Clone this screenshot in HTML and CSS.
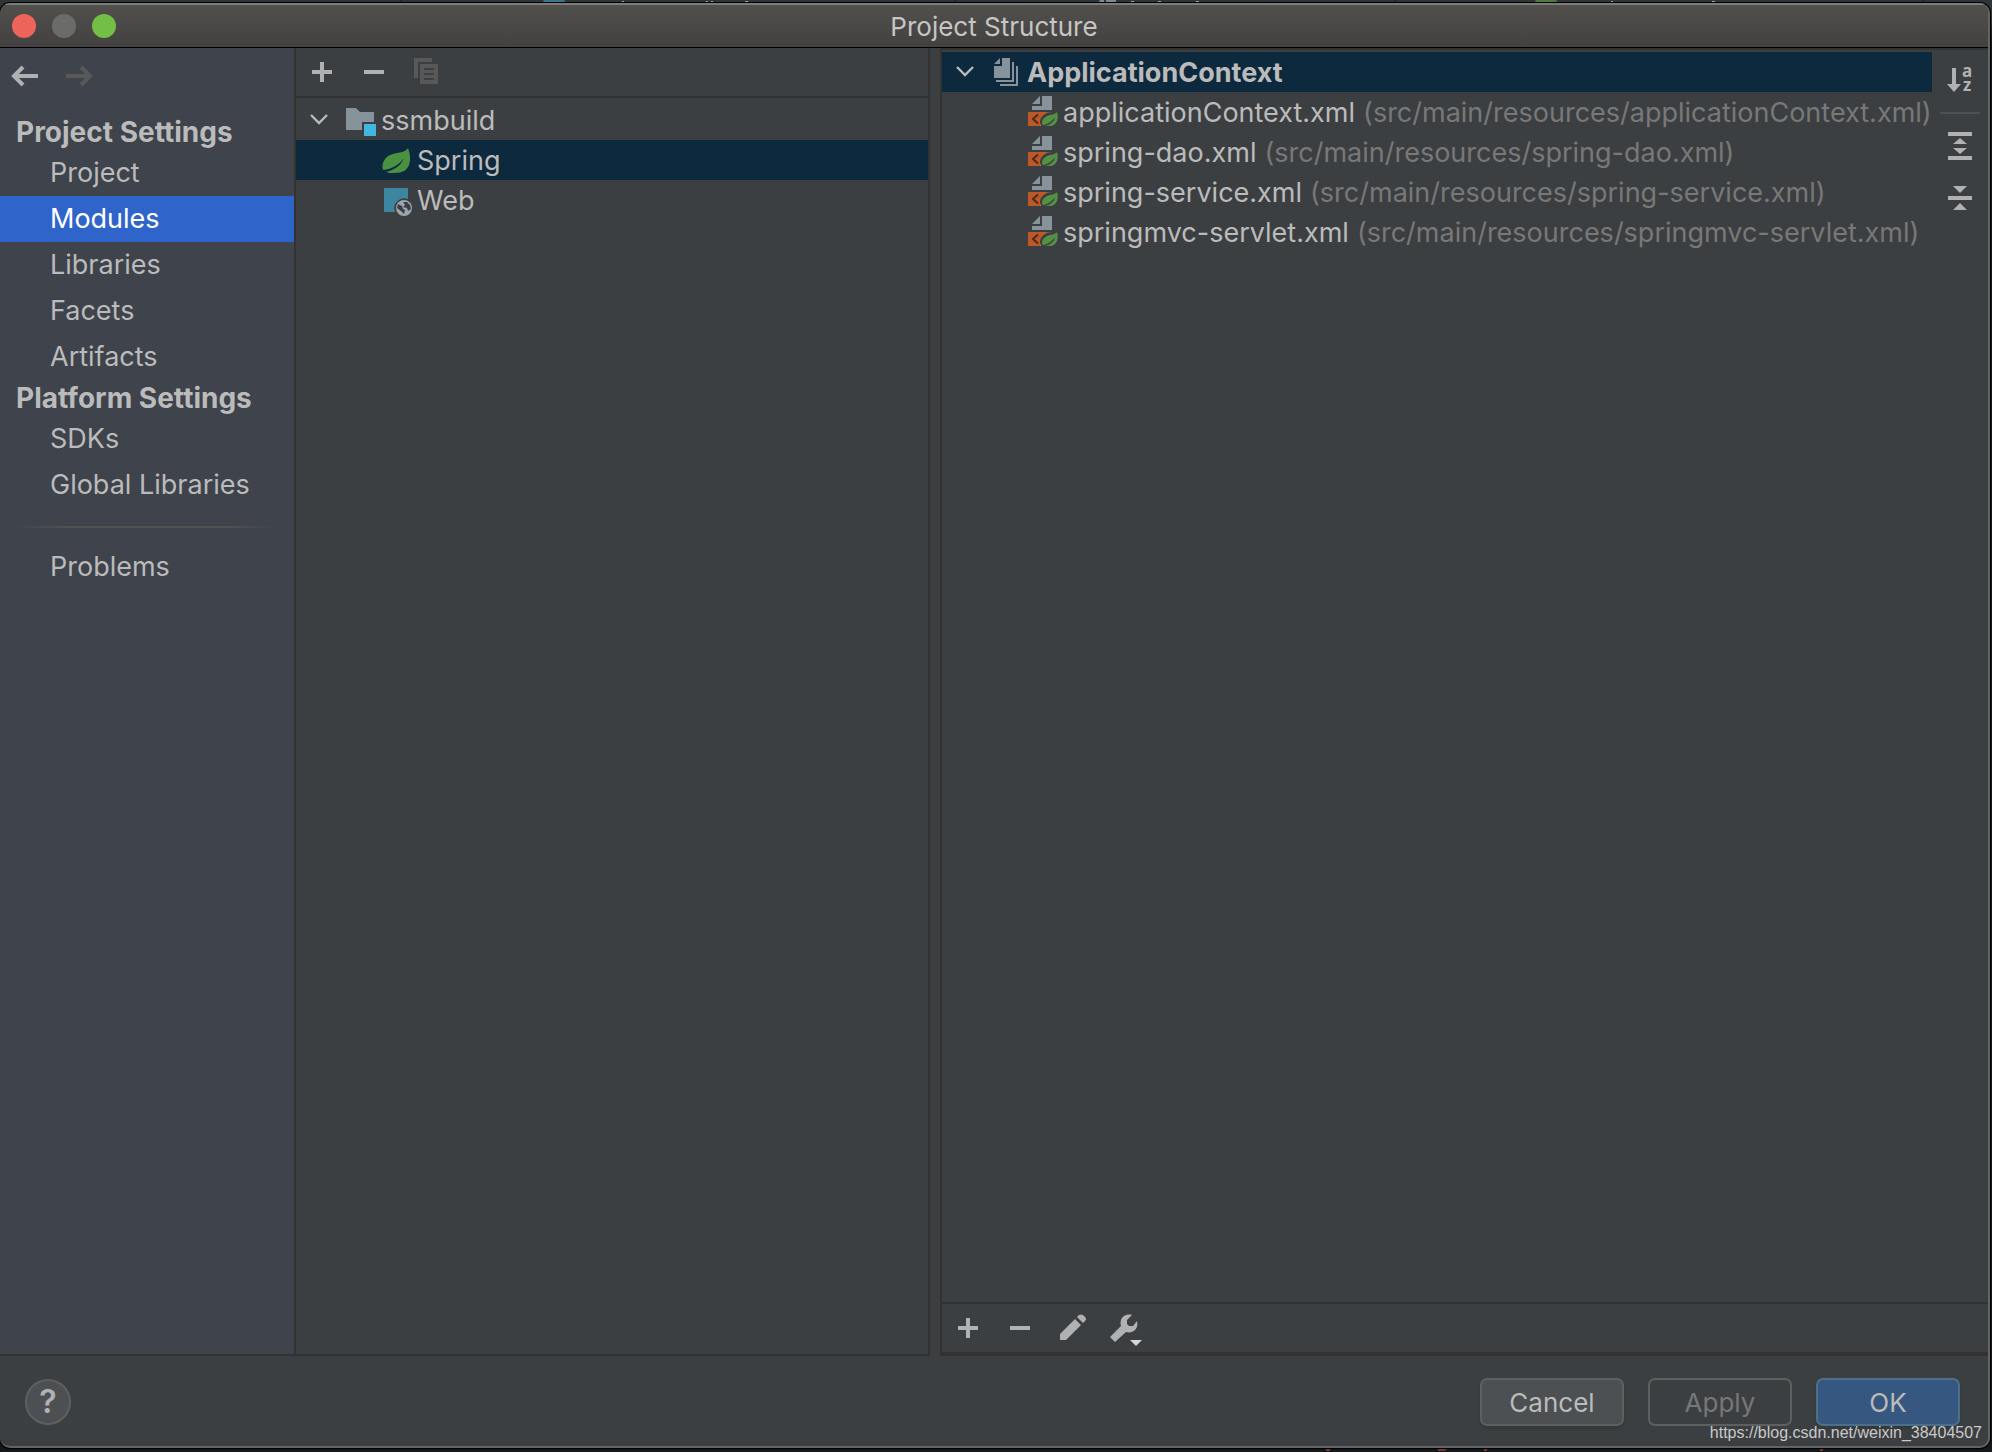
FILE: index.html
```
<!DOCTYPE html>
<html lang="en">
<head>
<meta charset="utf-8">
<title>Project Structure</title>
<link rel="stylesheet" href="styles.css">
</head>
<body>
<svg width="0" height="0" class="defs" aria-hidden="true">
  <symbol id="plus" viewBox="0 0 32 32"><path d="M14 6h4v8h8v4h-8v8h-4v-8H6v-4h8z"/></symbol>
  <symbol id="minus" viewBox="0 0 32 32"><path d="M6 14h20v4H6z"/></symbol>
  <symbol id="chevron" viewBox="0 0 20 20"><path d="M1 5l8 8 8-8" fill="none" stroke="currentColor" stroke-width="2.4"/></symbol>
  <symbol id="springxml" viewBox="0 0 32 32">
    <path d="M6 8l8-8v8zM16 0h10v14H6v-4h10z" fill="#87939a"/>
    <path d="M2 16h24v14H2z" fill="#bd5929"/>
    <path d="M12 18.500l-5 4.500 5 4.500" fill="none" stroke="#4b2a1c" stroke-width="2"/>
    <path d="M32 14c-3 3-8 1-13 4-6 4-6 9-3 12h14l2-4z" fill="#3c3f41"/>
    <path d="M31 16c-2 3-6 2-10 4-5 3-6 6-4 9 6-1 9-4 12-8-1 5-5 8-10 9h6c6-1 8-8 6-14z" fill="#549142"/>
  </symbol>
</svg>
<div class="backdrop">
  <svg class="backtabs" viewBox="0 0 1992 3" width="1992" height="3" aria-hidden="true">
    <path d="M400 0h2v3h-2zM954 0h2v3h-2zM1394 0h2v3h-2zM1922 0h2v3h-2z" fill="#25282a"/>
    <path d="M544 0h20l2 3h-24z" fill="#38758f"/>
    <path d="M1100 0h4v3h-6zM1106 0h10v3h-10z" fill="#7d8a92"/>
    <path d="M1536 0h20l2 3h-24z" fill="#4c7b3b"/>
    <path d="M579 2h9v1h-9zM622 1h2v2h-2zM636 2h8v1h-8zM706 1h2v2h-2zM711 1h2v2h-2zM745 1h3v2h-3zM1131 1h3v2h-3zM1158 1h3v2h-3zM1196 1h3v2h-3zM1571 2h9v1h-9zM1611 1h2v2h-2zM1623 2h3v1h-3zM1638 2h3v1h-3zM1712 1h3v2h-3z" fill="#a0a3a5"/>
  </svg>
  <main class="window">
    <header class="titlebar">
      <div class="lights">
        <button class="light close" aria-label="Close"></button>
        <button class="light minimize" aria-label="Minimize"></button>
        <button class="light zoom" aria-label="Zoom"></button>
      </div>
      <h1>Project Structure</h1>
    </header>
    <div class="content">
      <nav class="sidebar">
        <div class="history">
          <button aria-label="Back"><svg width="28" height="24" viewBox="0 0 28 24"><path d="M26 12H3M11 3l-9 9 9 9" fill="none" stroke="currentColor" stroke-width="4"/></svg></button>
          <button aria-label="Forward" class="off"><svg width="28" height="24" viewBox="0 0 28 24"><path d="M0 12h23M15 3l9 9-9 9" fill="none" stroke="currentColor" stroke-width="4"/></svg></button>
        </div>
        <h2>Project Settings</h2>
        <a href="#project">Project</a>
        <a href="#modules" class="current">Modules</a>
        <a href="#libraries">Libraries</a>
        <a href="#facets">Facets</a>
        <a href="#artifacts">Artifacts</a>
        <h2>Platform Settings</h2>
        <a href="#sdks">SDKs</a>
        <a href="#global">Global Libraries</a>
        <hr>
        <a href="#problems">Problems</a>
      </nav>
      <section class="modules">
        <div class="toolbar">
          <button aria-label="Add"><svg width="32" height="32"><use href="#plus"/></svg></button>
          <button aria-label="Remove"><svg width="32" height="32"><use href="#minus"/></svg></button>
          <button aria-label="Copy" class="off"><svg width="32" height="32" viewBox="0 0 32 32"><path d="M4 2h18v4H8v16H4z"/><path fill-rule="evenodd" d="M10 8h18v20H10zM14 12v2h10v-2zM14 17v2h10v-2zM14 22v2h10v-2z"/></svg></button>
        </div>
        <ul class="tree">
          <li class="row root"><svg class="arrow" width="20" height="20"><use href="#chevron"/></svg>
            <svg width="32" height="32" viewBox="0 0 32 32"><path d="M2 4h10l4 4h14v10H18v8H2z" fill="#87939a"/><path d="M20 20h12v12H20z" fill="#40b6e0"/></svg><span>ssmbuild</span></li>
          <li class="row leaf selected"><svg width="32" height="32" viewBox="0 0 32 32"><path d="M28 4c-3 5-9 4-15 6C5 12 1 19 3 26c9-1 16-5 21-12-3 8-10 12-18 14 2 1 5 1 8 1 9 0 13-3 15-8 2-6 1-11-1-17z" fill="#4b9142"/></svg><span>Spring</span></li>
          <li class="row leaf"><svg width="32" height="32" viewBox="0 0 32 32"><path d="M4 4h24v11a10 10 0 0 0-13 13H4z" fill="#3e86a0"/><circle cx="24" cy="24" r="8" fill="#9aa7b0"/><path d="M18 20l4 2 1 3 2 1-1 4-3-3-4-3zM23 18h4l3 3 1 4-3 2-1-3-4-1 2-2z" fill="#3c3f41"/></svg><span>Web</span></li>
        </ul>
      </section>
      <section class="contexts">
        <div class="upper">
          <ul class="tree files">
            <li class="row root selected"><svg class="arrow" width="20" height="20"><use href="#chevron"/></svg>
              <svg width="32" height="32" viewBox="0 0 32 32"><path d="M4 8l6-6v6zM12 2h8v20H4V10h8z" fill="#87939a"/><path d="M22 6h2v20H6v-2h16zM26 10h2v20H10v-2h16z" fill="#87939a"/></svg><strong>ApplicationContext</strong></li>
            <li class="row leaf"><svg width="32" height="32"><use href="#springxml"/></svg><span>applicationContext.xml</span><span class="path">(src/main/resources/applicationContext.xml)</span></li>
            <li class="row leaf"><svg width="32" height="32"><use href="#springxml"/></svg><span>spring-dao.xml</span><span class="path">(src/main/resources/spring-dao.xml)</span></li>
            <li class="row leaf"><svg width="32" height="32"><use href="#springxml"/></svg><span>spring-service.xml</span><span class="path">(src/main/resources/spring-service.xml)</span></li>
            <li class="row leaf"><svg width="32" height="32"><use href="#springxml"/></svg><span>springmvc-servlet.xml</span><span class="path">(src/main/resources/springmvc-servlet.xml)</span></li>
          </ul>
          <div class="sidebuttons">
            <button aria-label="Sort alphabetically" class="sort"><svg width="16" height="32" viewBox="0 0 16 32"><path d="M6 4h4v16h5l-7 8-7-8h5z"/></svg><span class="letters"><span>a</span><span>z</span></span></button>
            <span class="divider"></span>
            <button aria-label="Expand all"><svg width="32" height="32" viewBox="0 0 32 32"><path d="M4 2h24v4H4zM4 26h24v4H4zM16 8l7 6H9zM16 24l7-6H9z"/></svg></button>
            <button aria-label="Collapse all"><svg width="32" height="32" viewBox="0 0 32 32"><path d="M4 14h24v4H4zM16 11l7-7H9zM16 21l7 7H9z"/></svg></button>
          </div>
        </div>
        <div class="toolbar lower">
          <button aria-label="Add"><svg width="32" height="32"><use href="#plus"/></svg></button>
          <button aria-label="Remove"><svg width="32" height="32"><use href="#minus"/></svg></button>
          <button aria-label="Edit"><svg width="32" height="32" viewBox="0 0 32 32"><path d="M4 28v-6L19 7l6 6-15 15zM21 5l2-2q2-1 4 0l2 2q2 2 0 4l-2 2z"/></svg></button>
          <button aria-label="Settings"><svg width="32" height="32" viewBox="0 0 32 32"><path d="M2 25l11-11c-2-7 3-13 11-11l-5 5v4l2 2h4l4-5c2 8-4 13-11 11L7 30z"/><path d="M22 28h12l-6 6z" fill="#d5d5d5"/></svg></button>
        </div>
      </section>
    </div>
    <footer class="footer">
      <button class="help" aria-label="Help">?</button>
      <div class="actions">
        <button class="action">Cancel</button>
        <button class="action" disabled>Apply</button>
        <button class="action primary">OK</button>
      </div>
    </footer>
  </main>
  <svg class="backcode" viewBox="0 0 1992 4" width="1992" height="4" aria-hidden="true">
    <path d="M1326 1h4v2h-4zM1438 1h9l-2 2h-7zM1484 1h3v2h-3zM1820 1h3v2h-3z" fill="#7a3432"/>
  </svg>
  <p class="watermark">https://blog.csdn.net/weixin_38404507</p>
</div>
</body>
</html>
```
FILE: styles.css
```
* { box-sizing: border-box; }

body {
  margin: 0;
  background: #161718;
  color: #bbbbbb;
  font: 26px/40px Inter, "Liberation Sans", sans-serif;
}

button {
  padding: 0;
  border: 0;
  background: none;
  color: inherit;
  font: inherit;
}

svg { display: block; flex: none; fill: currentColor; overflow: visible; }
h1, h2, p, ul { margin: 0; padding: 0; font-size: inherit; }

.defs { position: absolute; }

.backdrop {
  position: relative;
  display: flex;
  flex-direction: column;
  height: 100vh;
  padding-right: 2px;
  background: linear-gradient(#2f3437 20px, #161718 40px);
  overflow: hidden;
}
.backtabs { height: 3px; overflow: hidden; }
.backcode { height: 4px; overflow: hidden; }

.window {
  flex: 1;
  display: flex;
  flex-direction: column;
  min-height: 0;
  border: solid #616364;
  border-width: 0 2px 2px 0;
  border-radius: 10px;
  background: #3c3f41;
  box-shadow: 0 0 0 1px #000;
  overflow: hidden;
}

.titlebar {
  display: grid;
  grid-template-columns: 1fr auto 1fr;
  align-items: center;
  height: 45px;
  border-top: 2px solid #7c7c7a;
  border-bottom: 1px solid #000;
  background: linear-gradient(#51504d, #424140);
}
.titlebar h1 { padding-top: 2px; font-weight: 400; color: #c6c6c4; }
.lights { display: flex; gap: 16px; padding-left: 12px; }
.light { width: 24px; height: 24px; border-radius: 50%; }
.close { background: #ed655a; }
.minimize { background: #6b6b69; }
.zoom { background: #72be47; }

.content { flex: 1; display: flex; min-height: 0; font-size: 27px; }

.sidebar {
  flex: none;
  width: 296px;
  border-right: 2px solid #323232;
  border-bottom: 2px solid #323232;
  background: #3e434c;
}
.history { display: flex; gap: 26px; height: 66px; padding: 16px 12px; color: #afb1b3; }
.history button { height: 24px; }
.off { color: #585858; }
.sidebar h2 { padding-left: 16px; font-size: 28px; line-height: 36px; font-weight: 700; }
.sidebar a {
  display: block;
  padding-left: 50px;
  line-height: 46px;
  color: inherit;
  text-decoration: none;
}
.sidebar .current { background: #2f65ca; color: #fff; }
.sidebar hr {
  height: 2px;
  margin: 18px 12px 16px;
  border: 0;
  background: linear-gradient(90deg, transparent, #515151 20%, #515151 80%, transparent);
}

.modules {
  flex: none;
  width: 634px;
  border-right: 2px solid #323232;
  border-bottom: 2px solid #323232;
}
.toolbar {
  display: flex;
  align-items: flex-start;
  gap: 20px;
  height: 50px;
  padding: 8px 10px;
  border-bottom: 2px solid #323232;
  color: #afb1b3;
}
.toolbar .off { color: #585858; }

.tree { padding-top: 2px; list-style: none; }
.row { display: flex; align-items: center; gap: 5px; height: 40px; white-space: nowrap; }
.row span, .row strong { padding-top: 1px; }
.root { padding-left: 14px; }
.leaf { padding-left: 84px; }
.arrow { margin-right: 9px; }
.selected { background: #0d293e; }
.path { margin-left: 3px; color: #787878; }

.contexts {
  flex: 1;
  display: flex;
  flex-direction: column;
  min-width: 0;
  margin-left: 10px;
  border: solid #323232;
  border-width: 2px 0 4px 2px;
}
.upper { flex: 1; display: flex; min-height: 0; }
.files { flex: 1; min-width: 0; }
.sidebuttons {
  flex: none;
  display: flex;
  flex-direction: column;
  align-items: center;
  width: 56px;
  padding-top: 14px;
  color: #afb1b3;
}
.sort { display: flex; width: 28px; }
.letters {
  display: grid;
  grid-template-rows: 14px 14px;
  font: 700 17px/14px "Open Sans", sans-serif;
}
.divider { width: 40px; height: 2px; margin: 16px 0; background: #515151; }
.divider + button { margin-bottom: 20px; }
.lower { height: 50px; padding: 8px 10px; border: 0; border-top: 2px solid #323232; }

.footer {
  display: flex;
  justify-content: space-between;
  align-items: center;
  height: 90px;
  padding: 2px 28px 0 25px;
}
.help {
  width: 46px;
  height: 46px;
  border: 2px solid #5e6060;
  border-radius: 50%;
  background: #4c5052;
  color: #afb1b3;
  font-weight: 600;
  font-size: 32px;
}
.actions { display: flex; gap: 24px; }
.action {
  width: 144px;
  height: 48px;
  padding-top: 1px;
  border: 2px solid #5e6060;
  border-radius: 7px;
  background: #4c5052;
  box-shadow: 0 3px 2px #36393a;
}
.action:disabled { background: none; box-shadow: none; color: #777777; }
.primary { border-color: #4c708c; background: #365880; }

.watermark {
  position: absolute;
  right: 10px;
  bottom: 9px;
  color: #c8c9ca;
  font: 16px/20px "Liberation Sans", sans-serif;
}
```
